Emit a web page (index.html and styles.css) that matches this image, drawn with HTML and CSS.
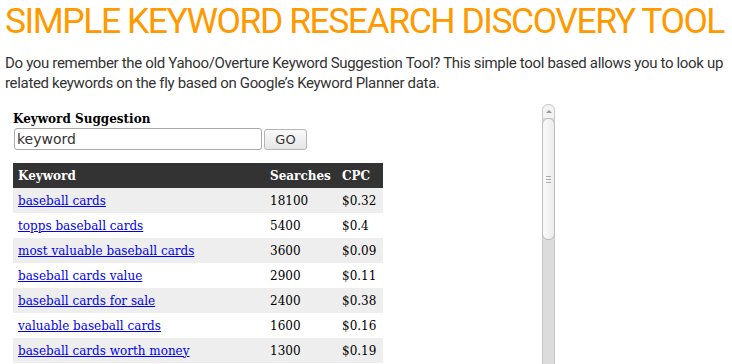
FILE: index.html
```html
<!DOCTYPE html>
<html lang="en">
<head>
  <meta charset="UTF-8">
  <meta name="viewport" content="width=device-width, initial-scale=1.0">
  <title>Simple Keyword Research Discovery Tool</title>
  <link rel="stylesheet" href="styles.css">
</head>
<body>
  <h1 class="title">SIMPLE KEYWORD RESEARCH DISCOVERY TOOL</h1>
  <p class="intro">Do you remember the old Yahoo/Overture Keyword Suggestion Tool? This simple tool based allows you to look up related keywords on the fly based on Google’s Keyword Planner data.</p>

  <!-- Embedded tool frame -->
  <div class="frame-wrap">
    <div class="frame">
      <form class="search">
        <label class="search-label" for="kw">Keyword Suggestion</label>
        <div class="search-row">
          <input type="text" class="search-input" id="kw" value="keyword">
          <button type="button" class="search-btn">GO</button>
        </div>
      </form>

      <table class="results">
        <thead>
          <tr>
            <th class="col-kw">Keyword</th>
            <th class="col-num">Searches</th>
            <th class="col-cpc">CPC</th>
          </tr>
        </thead>
        <tbody>
          <tr><td><a href="#">baseball cards</a></td><td>18100</td><td>$0.32</td></tr>
          <tr><td><a href="#">topps baseball cards</a></td><td>5400</td><td>$0.4</td></tr>
          <tr><td><a href="#">most valuable baseball cards</a></td><td>3600</td><td>$0.09</td></tr>
          <tr><td><a href="#">baseball cards value</a></td><td>2900</td><td>$0.11</td></tr>
          <tr><td><a href="#">baseball cards for sale</a></td><td>2400</td><td>$0.38</td></tr>
          <tr><td><a href="#">valuable baseball cards</a></td><td>1600</td><td>$0.16</td></tr>
          <tr><td><a href="#">baseball cards worth money</a></td><td>1300</td><td>$0.19</td></tr>
        </tbody>
      </table>
    </div>

    <!-- Fake scrollbar of the frame -->
    <div class="scrollbar">
      <div class="scroll-up"><span class="arrow"></span></div>
      <div class="scroll-thumb"><span class="grip"></span></div>
      <div class="scroll-track"></div>
    </div>
  </div>
</body>
</html>
```

FILE: styles.css
```css
/* General Styles */
* {
  margin: 0;
  padding: 0;
  box-sizing: border-box;
}

body {
  font-family: Roboto, "Liberation Sans", sans-serif;
  background: #fff;
  padding: 0 5px;
  height: 364px;
  overflow: hidden;
}

.title {
  margin-top: 1px;
  font-size: 35.5px;
  line-height: 40px;
  font-weight: 400;
  letter-spacing: -1.47px;
  white-space: nowrap;
  color: #ff9900;
}

.intro {
  margin-top: 12px;
  font-size: 15px;
  line-height: 20px;
  letter-spacing: -0.33px;
  color: #333;
}

/* Frame */
.frame-wrap {
  margin-top: 11px;
  display: flex;
  width: 550px;
  height: 270px;
}

.frame {
  flex: 1;
  padding: 8px;
  overflow: hidden;
  font-family: "DejaVu Serif", serif;
  font-size: 12px;
}

.search-label {
  display: block;
  font-weight: bold;
  line-height: 15px;
}

.search-row {
  display: flex;
  align-items: center;
  gap: 2px;
  margin-top: 1px;
  margin-left: 1px;
}

.search-input {
  width: 248px;
  height: 22px;
  padding: 0 2px;
  border: 1px solid #a9a9a9;
  border-radius: 3px;
  font-family: "DejaVu Sans", sans-serif;
  font-size: 14px;
  color: #333;
}

.search-btn {
  width: 43px;
  height: 21px;
  border: 1px solid #b5b5b5;
  border-radius: 3px;
  background: linear-gradient(#fafafa, #e6e6e6);
  font-family: "DejaVu Sans", sans-serif;
  font-size: 13px;
  color: #333;
}

/* Results table */
.results {
  margin-top: 13px;
  width: 370px;
  table-layout: fixed;
  border-collapse: collapse;
}

.results th,
.results td {
  height: 25px;
  padding: 0 5px;
  text-align: left;
  white-space: nowrap;
}

.results th {
  background: #333;
  color: #fff;
  font-weight: bold;
}

.results .col-kw { width: 252px; }
.results .col-num { width: 72px; }
.results .col-cpc { width: 46px; }

.results tbody tr:nth-child(odd) {
  background: #eee;
}

.results a {
  color: #0000ee;
}

/* Scrollbar */
.scrollbar {
  width: 13px;
  display: flex;
  flex-direction: column;
  border: 1px solid #c8c8c8;
  border-radius: 6px 6px 0 0;
  background: #dcdcdc;
}

.scroll-up {
  height: 13px;
  background: #f3f3f3;
  border-radius: 6px 6px 0 0;
  display: flex;
  justify-content: center;
  align-items: center;
}

.arrow {
  width: 0;
  height: 0;
  border-left: 3px solid transparent;
  border-right: 3px solid transparent;
  border-bottom: 3px solid #999;
}

.scroll-thumb {
  height: 122px;
  background: linear-gradient(to right, #fafafa, #ececec);
  border: 1px solid #bdbdbd;
  border-radius: 6px;
  margin: 0 -1px;
  display: flex;
  justify-content: center;
  align-items: center;
}

.grip {
  width: 5px;
  height: 7px;
  background: repeating-linear-gradient(#aaa 0 1px, transparent 1px 3px);
}

.scroll-track {
  flex: 1;
}
```
